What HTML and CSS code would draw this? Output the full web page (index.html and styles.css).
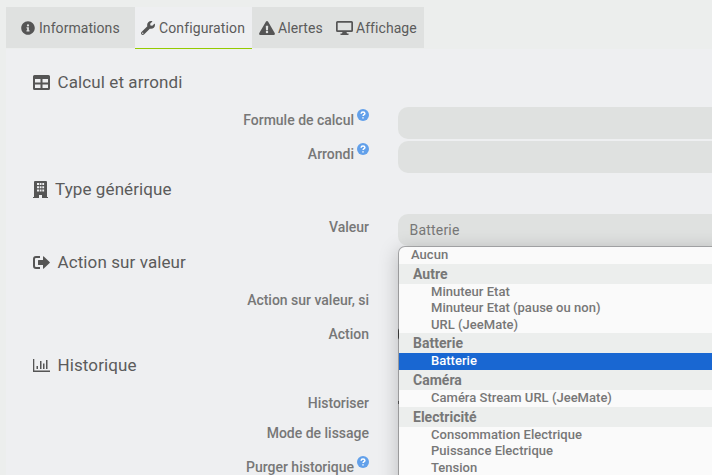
FILE: index.html
```html
<!DOCTYPE html>
<html lang="fr">
<head>
<meta charset="utf-8">
<title>Configuration</title>
<link rel="stylesheet" href="styles.css">
</head>
<body>
<nav class="tabs">
  <a class="tab tab-info"><svg class="ic" width="14" height="14" viewBox="0 0 512 512"><path d="M256 8C119 8 8 119 8 256s111 248 248 248 248-111 248-248S393 8 256 8zm0 110a42 42 0 1 1 0 84 42 42 0 0 1 0-84zm56 254c0 7-5 12-12 12h-88c-7 0-12-5-12-12v-24c0-7 5-12 12-12h12v-64h-12c-7 0-12-5-12-12v-24c0-7 5-12 12-12h64c7 0 12 5 12 12v100h12c7 0 12 5 12 12z"/></svg><span>Informations</span></a>
  <a class="tab tab-config active"><svg class="ic" width="14" height="14" viewBox="0 0 512 512"><path d="M507.700 109.100c-2.200-9-13.500-12.100-20.100-5.500l-74.400 74.400-67.900-11.300-11.300-67.900 74.400-74.400c6.600-6.600 3.400-17.900-5.700-20.200-47.400-11.700-99.600.9-136.600 37.900-39.600 39.600-50.500 97.100-34.100 147.200L18.700 402.800c-25 25-25 65.500 0 90.500s65.500 25 90.500 0l213.200-213.200c50.100 16.700 107.500 5.700 147.400-34.200 37.100-37.100 49.700-89.300 37.900-136.800zM64 472a24 24 0 1 1 0-48 24 24 0 0 1 0 48z"/></svg><span>Configuration</span></a>
  <a class="tab tab-alert"><svg class="ic" width="16" height="14" viewBox="0 0 576 512"><path d="M569.500 440c18.500 32-4.700 72-41.600 72H48c-36.900 0-60-40-41.500-72L246.400 24c18.500-32 64.700-32 83.200 0zM288 354a46 46 0 1 0 0 92 46 46 0 0 0 0-92zm-43.700-165.300 7.400 136c.4 6.400 5.600 11.300 12 11.300h48.600c6.400 0 11.600-5 12-11.300l7.400-136c.4-6.900-5.100-12.700-12-12.700h-63.400c-6.900 0-12.400 5.800-12 12.700z"/></svg><span>Alertes</span></a>
  <a class="tab tab-display"><svg class="ic" width="17" height="14" viewBox="0 0 17 14"><path fill-rule="evenodd" d="M1.500 0h14Q17 0 17 1.500v8Q17 11 15.500 11h-5l.5 1.500h1.500V14h-8v-1.500H6l.5-1.500h-5Q0 11 0 9.500v-8Q0 0 1.500 0zM1.700 1.700v7.600h13.600V1.700z"/></svg><span>Affichage</span></a>
</nav>
<main class="panel">
  <h2 class="legend"><svg width="17" height="15" viewBox="0 0 17 15"><path fill-rule="evenodd" d="M1.500 0h14Q17 0 17 1.500v12q0 1.500-1.500 1.500h-14Q0 15 0 13.500v-12Q0 0 1.500 0zM2 4v3.500h5.500V4zm7.500 0v3.500H15V4zM2 9.500V13h5.500V9.500zm7.500 0V13H15V9.500z"/></svg><span>Calcul et arrondi</span></h2>
  <div class="row"><label>Formule de calcul<svg class="help" viewBox="0 0 12 12"><circle cx="6" cy="6" r="6"/><path d="M4.100 4.700Q4.200 3 6 3t1.900 1.500C7.900 5.700 6.100 5.700 6.100 7M6 8.200v1.300"/></svg></label><div class="field"></div></div>
  <div class="row"><label>Arrondi<svg class="help" viewBox="0 0 12 12"><circle cx="6" cy="6" r="6"/><path d="M4.100 4.700Q4.200 3 6 3t1.900 1.500C7.900 5.700 6.100 5.700 6.100 7M6 8.200v1.300"/></svg></label><div class="field"></div></div>
  <h2 class="legend type"><svg width="15" height="17" viewBox="0 0 15 17"><path fill-rule="evenodd" d="M1 1Q1 0 2 0h11q1 0 1 1v15h1v1H9v-3H6v3H0v-1h1zM4 2v2h2V2zm2.700 0v2h1.800V2zm2.600 0v2h1.800V2zM4 5.200v2h2v-2zm2.700 0v2h1.800v-2zm2.600 0v2h1.800v-2zM4 8.400v2h2v-2zm2.700 0v2h1.800v-2zm2.600 0v2h1.800v-2z"/></svg><span>Type générique</span></h2>
  <div class="row"><label>Valeur</label><div class="field select">Batterie
    <div class="menu">
      <div class="option short root">Aucun</div>
      <div class="group">Autre</div>
      <div class="option short">Minuteur Etat</div>
      <div class="option short">Minuteur Etat (pause ou non)</div>
      <div class="option">URL (JeeMate)</div>
      <div class="group">Batterie</div>
      <div class="option selected">Batterie</div>
      <div class="group">Caméra</div>
      <div class="option single">Caméra Stream URL (JeeMate)</div>
      <div class="group">Electricité</div>
      <div class="option short">Consommation Electrique</div>
      <div class="option short">Puissance Electrique</div>
      <div class="option">Tension</div>
    </div></div></div>
  <h2 class="legend action"><svg width="17" height="13" viewBox="0 0 17 13"><path d="M7 0v2H3Q2 2 2 3v7q0 1 1 1h4v2H3q-3 0-3-3V3q0-3 3-3zM10 .7q0-.9.800-.3l5.800 5.500q.6.600 0 1.200l-5.800 5.500q-.8.500-.8-.4V9H5.500Q5 9 5 8.500v-4Q5 4 5.500 4H10z"/></svg><span>Action sur valeur</span></h2>
  <div class="row"><label>Action sur valeur, si</label></div>
  <div class="row"><label>Action</label><div class="button"></div></div>
  <h2 class="legend history"><svg width="17" height="13" viewBox="0 0 17 13"><path d="M0 0h1.300v11.500H17V13H0zM3.500 7H5v3H3.500zM7 2h1.500v8H7zM10 4.500h1.500V10H10zM13 1h1.500v9H13z"/></svg><span>Historique</span></h2>
  <div class="row compact"><label>Historiser</label><div class="check"></div></div>
  <div class="row"><label>Mode de lissage</label></div>
  <div class="row"><label>Purger historique<svg class="help" viewBox="0 0 12 12"><circle cx="6" cy="6" r="6"/><path d="M4.100 4.700Q4.200 3 6 3t1.900 1.500C7.900 5.700 6.100 5.700 6.100 7M6 8.200v1.300"/></svg></label></div>
</main>
</body>
</html>
```
FILE: styles.css
```css
* { box-sizing: border-box; }
body {
  margin: 0;
  height: 475px;
  padding: 7px 0 0 6px;
  overflow: hidden;
  background: #eceeed;
  color: #5b5b5b;
  font-family: Roboto, sans-serif;
  font-size: 14px;
}
svg { display: block; flex: none; fill: #555; }
.tabs { display: flex; height: 42px; }
.tab {
  display: flex;
  align-items: center;
  gap: 4px;
  height: 41px;
  background: #dfe1e0;
  letter-spacing: .06px;
  white-space: nowrap;
}
.tab-info { width: 129px; padding-left: 15px; }
.tab-config { width: 117px; padding-left: 6px; letter-spacing: .12px; }
.tab-alert { width: 77px; padding-left: 7px; gap: 3px; }
.tab-display { width: 95px; padding-left: 7px; gap: 3px; }
.tab.active { height: 42px; background: #eeeff1; border-bottom: 1px solid #94ca02; }
.panel { height: 426px; padding-top: 17px; overflow: hidden; background: #eeeff1; }
.legend {
  display: flex;
  align-items: center;
  gap: 7.5px;
  height: 32px;
  margin: 0 0 9px;
  padding-left: 27px;
  font-size: 17px;
  font-weight: 400;
  letter-spacing: .1px;
}
.legend.type { margin-top: -2px; gap: 7px; }
.legend.action { margin-top: -2px; }
.legend.history { margin-top: -6px; }
.row {
  display: grid;
  grid-template-columns: 363px 1fr;
  column-gap: 29px;
  height: 34px;
}
.row.compact { height: 30px; }
.row label {
  display: flex;
  justify-content: flex-end;
  height: 26px;
  line-height: 26px;
  font-weight: 500;
  color: #777;
  letter-spacing: -.01px;
}
.help { width: 12px; height: 12px; margin: 2px 0 0 3px; fill: #62a0ea; }
.help path { fill: none; stroke: #fff; stroke-width: 1.5; }
.field {
  height: 32px;
  background: #dfe1e0;
  border-radius: 10px 0 0 10px;
}
.button {
  width: 30px;
  height: 12px;
  margin-top: 7px;
  border-radius: 3px;
  background: #555;
}
.check {
  width: 12px;
  height: 3px;
  margin-top: 11px;
  background: #777;
}
.select {
  position: relative;
  padding-left: 11.5px;
  line-height: 32px;
  color: #777;
  letter-spacing: .2px;
}
.menu {
  position: absolute;
  z-index: 1;
  top: 32px;
  left: 0;
  width: 330px;
  height: 260px;
  overflow: hidden;
  border: 1px solid rgba(0, 0, 0, .27);
  border-radius: 7px;
  background: #fafafa;
  background-clip: padding-box;
  box-shadow: 0 4px 20px rgba(0, 0, 0, .22);
  font-size: 13px;
  font-weight: 500;
  letter-spacing: .02px;
}
.option { height: 17px; padding-left: 32px; line-height: 17px; }
.option.short { height: 16px; line-height: 16px; }
.option.root { height: 17px; padding-left: 12px; }
.option.single { line-height: 16px; }
.option.selected { background: #1967d2; color: #fff; line-height: 16px; }
.group {
  height: 20px;
  padding-left: 14px;
  background: #eceeed;
  font-size: 14px;
  font-weight: 700;
  line-height: 20px;
}
```
